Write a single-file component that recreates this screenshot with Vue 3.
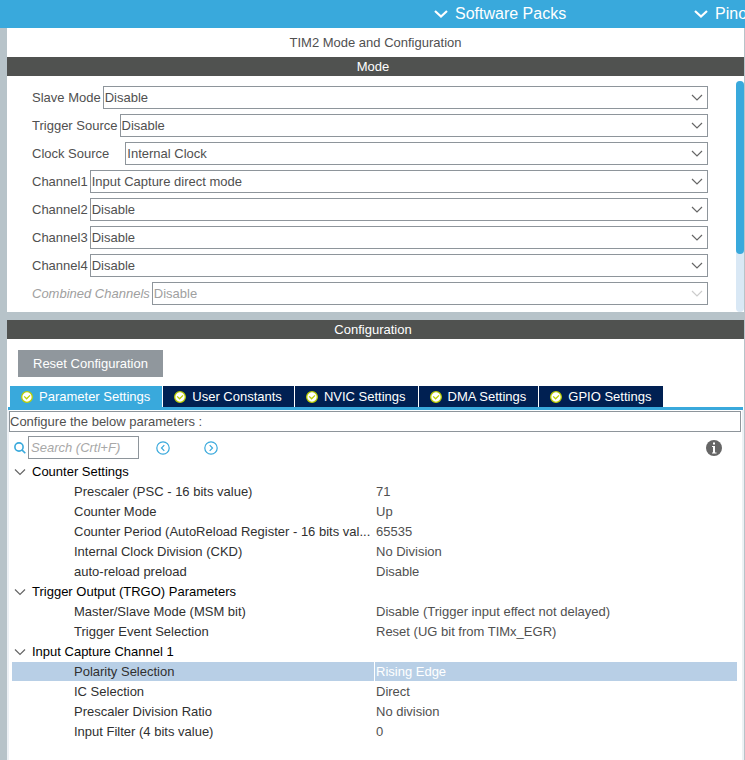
<template>
  <div class="config-view">
    <nav class="top-bar">
      <button v-for="m in menus" :key="m" type="button" class="menu-btn">
        <svg class="menu-icon" viewBox="0 0 14 10"><path d="M1 2 L7 7.5 L13 2" /></svg>
        <span>{{ m }}</span>
      </button>
    </nav>

    <main class="panels">
      <!-- Mode -->
      <section class="panel">
        <h1 class="title">TIM2 Mode and Configuration</h1>
        <h2 class="bar">Mode</h2>
        <div class="mode-body">
          <form class="mode-form">
            <div v-for="f in fields" :key="f.id" :class="['field', { disabled: f.disabled, wide: f.wide }]">
              <label :for="f.id">{{ f.label }}</label>
              <div class="select-box">
                <select :id="f.id" v-model="f.value" :disabled="f.disabled">
                  <option v-for="o in f.options" :key="o">{{ o }}</option>
                </select>
                <svg class="select-arrow" viewBox="0 0 12 8"><path d="M1 1 L6 6 L11 1" /></svg>
              </div>
            </div>
          </form>
          <div class="scroll-track"><div class="scroll-thumb"></div></div>
        </div>
      </section>

      <!-- Configuration -->
      <section class="panel config-panel">
        <h2 class="bar">Configuration</h2>
        <button type="button" class="reset-btn">Reset Configuration</button>

        <div class="tabs">
          <button
            v-for="t in tabs"
            :key="t"
            type="button"
            :class="['tab', { active: activeTab === t }]"
            @click="activeTab = t"
          >
            <svg class="tab-icon" viewBox="0 0 12 12">
              <circle cx="6" cy="6" r="5.3" />
              <path d="M3.2 5.4 L5.6 7.8 L9 4.4" />
            </svg>
            <span>{{ t }}</span>
          </button>
        </div>

        <div class="tab-content">
          <p class="hint">Configure the below parameters :</p>

          <div class="toolbar">
            <label for="search" aria-label="Search">
              <svg class="search-icon" viewBox="0 0 12 12">
                <circle cx="5" cy="5" r="4.1" />
                <path d="M7.9 7.9 L11.3 11.3" />
              </svg>
            </label>
            <input id="search" v-model="search" type="text" placeholder="Search (Crtl+F)" />
            <button type="button" class="icon-btn" aria-label="Previous">
              <svg viewBox="0 0 14 14"><circle cx="7" cy="7" r="6.2" /><path d="M8.3 4.2 L5.5 7 L8.3 9.8" /></svg>
            </button>
            <button type="button" class="icon-btn" aria-label="Next">
              <svg viewBox="0 0 14 14"><circle cx="7" cy="7" r="6.2" /><path d="M5.7 4.2 L8.5 7 L5.7 9.8" /></svg>
            </button>
            <button type="button" class="info-btn" aria-label="Info">
              <svg viewBox="0 0 16 16">
                <circle cx="8" cy="8" r="8" />
                <path d="M7 2.5h2v2H7z M6 6h3v6.5h1.5v1h-4.500v-1H7V7H6z" />
              </svg>
            </button>
          </div>

          <table class="params">
            <tbody v-for="g in groups" :key="g.name">
              <tr>
                <th colspan="2">
                  <button type="button" class="group-btn" @click="g.open = !g.open">
                    <svg :class="['group-arrow', { closed: !g.open }]" viewBox="0 0 12 8">
                      <path d="M1 1.5 L6 6.5 L11 1.5" />
                    </svg>
                    <span>{{ g.name }}</span>
                  </button>
                </th>
              </tr>
              <template v-if="g.open">
                <tr
                  v-for="p in g.params"
                  :key="p[0]"
                  :class="{ selected: selected === p[0] }"
                  @click="selected = p[0]"
                >
                  <td class="name">{{ p[0] }}</td>
                  <td class="value">{{ p[1] }}</td>
                </tr>
              </template>
            </tbody>
          </table>
        </div>
      </section>
    </main>
  </div>
</template>

<script setup>
import { ref } from 'vue'

const menus = ['Software Packs', 'Pinout']
const tabs = ['Parameter Settings', 'User Constants', 'NVIC Settings', 'DMA Settings', 'GPIO Settings']

const activeTab = ref('Parameter Settings')
const selected = ref('Polarity Selection')
const search = ref('')

const fields = ref([
  { id: 'slave', label: 'Slave Mode', value: 'Disable', options: ['Disable'] },
  { id: 'trigger', label: 'Trigger Source', value: 'Disable', options: ['Disable'] },
  { id: 'clock', label: 'Clock Source', value: 'Internal Clock', options: ['Disable', 'Internal Clock'], wide: true },
  { id: 'ch1', label: 'Channel1', value: 'Input Capture direct mode', options: ['Disable', 'Input Capture direct mode'] },
  { id: 'ch2', label: 'Channel2', value: 'Disable', options: ['Disable'] },
  { id: 'ch3', label: 'Channel3', value: 'Disable', options: ['Disable'] },
  { id: 'ch4', label: 'Channel4', value: 'Disable', options: ['Disable'] },
  { id: 'combined', label: 'Combined Channels', value: 'Disable', options: ['Disable'], disabled: true }
])

const groups = ref([
  {
    name: 'Counter Settings',
    open: true,
    params: [
      ['Prescaler (PSC - 16 bits value)', '71'],
      ['Counter Mode', 'Up'],
      ['Counter Period (AutoReload Register - 16 bits val...', '65535'],
      ['Internal Clock Division (CKD)', 'No Division'],
      ['auto-reload preload', 'Disable']
    ]
  },
  {
    name: 'Trigger Output (TRGO) Parameters',
    open: true,
    params: [
      ['Master/Slave Mode (MSM bit)', 'Disable (Trigger input effect not delayed)'],
      ['Trigger Event Selection', 'Reset (UG bit from TIMx_EGR)']
    ]
  },
  {
    name: 'Input Capture Channel 1',
    open: true,
    params: [
      ['Polarity Selection', 'Rising Edge'],
      ['IC Selection', 'Direct'],
      ['Prescaler Division Ratio', 'No division'],
      ['Input Filter (4 bits value)', '0']
    ]
  }
])
</script>

<style>
body {
  background: #b7c3c9;
}
</style>

<style scoped>
.config-view {
  display: flex;
  flex-direction: column;
  min-height: 100vh;
  overflow: hidden;
  font-family: "Liberation Sans", Arial, sans-serif;
  font-size: 13px;
  line-height: 20px;
  color: #505050;
}

button,
input,
select {
  font: inherit;
  color: inherit;
  margin: 0;
  border-radius: 0;
}

button {
  border: none;
  background: none;
  padding: 0;
  cursor: pointer;
}

svg {
  display: block;
  fill: none;
}

.top-bar {
  display: flex;
  height: 28px;
  padding-left: 434px;
  background: #39a9dc;
  overflow: hidden;
}

.menu-btn {
  display: flex;
  flex: 0 0 260px;
  align-items: center;
  gap: 7px;
  font-size: 16px;
  color: #fff;
}

.menu-icon {
  width: 14px;
  height: 10px;
  stroke: #fff;
  stroke-width: 2.2;
}

.panels {
  flex: 1;
  display: flex;
  flex-direction: column;
  gap: 8px;
  padding: 0 1px 0 7px;
}

.panel {
  background: #fff;
}

.title {
  margin: 0;
  font-size: 13px;
  font-weight: normal;
  line-height: 29px;
  text-align: center;
}

.bar {
  margin: 0;
  padding-right: 5px;
  background: #505250;
  color: #fff;
  font-size: 13px;
  font-weight: normal;
  line-height: 19px;
  text-align: center;
}

.mode-body {
  display: flex;
  justify-content: space-between;
  gap: 28px;
  padding-top: 5px;
}

.mode-form {
  flex: 1;
  display: flex;
  flex-direction: column;
  gap: 5px;
  padding: 5px 0 7px 25px;
}

.field {
  display: flex;
  align-items: center;
  gap: 2px;
}

.field.wide {
  gap: 16px;
}

.field.disabled {
  color: #a0a0a0;
}

.field.disabled label {
  font-style: italic;
}

.select-box {
  position: relative;
  flex: 1;
}

.select-box select {
  display: block;
  width: 100%;
  height: 23px;
  padding: 0 20px 0 1px;
  border: 1px solid #8e959b;
  background: #fff;
  appearance: none;
  opacity: 1;
}

.select-arrow {
  position: absolute;
  right: 5px;
  top: 8px;
  width: 12px;
  height: 8px;
  stroke: #666;
  stroke-width: 1.2;
  pointer-events: none;
}

.disabled .select-arrow {
  stroke: #ccc;
}

.scroll-track {
  width: 8px;
  border-radius: 4px;
  background: #d9e8f5;
}

.scroll-thumb {
  height: 75%;
  border-radius: 4px;
  background: #39a9dc;
}

.config-panel {
  flex: 1;
  display: flex;
  flex-direction: column;
}

.reset-btn {
  align-self: flex-start;
  height: 27px;
  margin: 11px 11px 9px;
  padding: 0 15px;
  background: #90979d;
  color: #fff;
}

.tabs {
  display: flex;
  gap: 1px;
  margin: 0 1px;
  padding-left: 2px;
  border-bottom: 3px solid #39a9dc;
}

.tab {
  display: flex;
  align-items: center;
  gap: 6px;
  height: 21px;
  padding: 0 12px 0 11px;
  background: #002052;
  color: #fff;
}

.tab.active {
  background: #39a9dc;
}

.tab-icon {
  width: 12px;
  height: 12px;
  stroke: #bccf00;
  stroke-width: 1.3;
}

.tab-icon circle {
  fill: #fff;
}

.tab-content {
  flex: 1;
  padding-top: 1px;
  border: solid #edf1f5;
  border-width: 0 2px;
}

.hint {
  margin: 0 1px 0 0;
  border: 1px solid #8e959b;
  line-height: 19px;
}

.toolbar {
  display: flex;
  align-items: center;
  padding: 4px 20px 3px 5px;
}

.search-icon {
  width: 12px;
  height: 12px;
  margin-right: 2px;
  stroke: #39a9dc;
  stroke-width: 1.6;
}

#search {
  box-sizing: border-box;
  width: 111px;
  height: 23px;
  margin-right: 17px;
  padding: 0 2px;
  border: 1px solid #8e959b;
  outline: none;
}

#search::placeholder {
  color: #a8a8a8;
  font-style: italic;
}

.icon-btn {
  width: 14px;
  margin-right: 34px;
}

.icon-btn svg {
  width: 14px;
  height: 14px;
  stroke: #39a9dc;
  stroke-width: 1.2;
}

.info-btn {
  width: 16px;
  margin-left: auto;
}

.info-btn circle {
  fill: #666;
}

.info-btn path {
  fill: #fff;
}

.params {
  width: calc(100% - 8px);
  margin: 0 5px 0 3px;
  border-collapse: collapse;
  table-layout: fixed;
}

.params th,
.params td {
  height: 19px;
  padding: 0;
  border-bottom: 1px solid #fff;
  line-height: 19px;
  font-weight: normal;
  text-align: left;
  white-space: nowrap;
}

.params .name {
  padding-left: 62px;
  border-right: 1px solid #fff;
  color: #303030;
}

.params .value {
  padding-left: 1px;
}

.selected td {
  background: #b8cfe6;
}

.params .selected .value {
  color: #fff;
}

.group-btn {
  display: flex;
  align-items: center;
  gap: 6px;
  padding-left: 2px;
  line-height: 19px;
  color: #000;
}

.group-arrow {
  width: 12px;
  height: 8px;
  stroke: #666;
  stroke-width: 1.2;
}

.group-arrow.closed {
  transform: rotate(-90deg);
}
</style>
